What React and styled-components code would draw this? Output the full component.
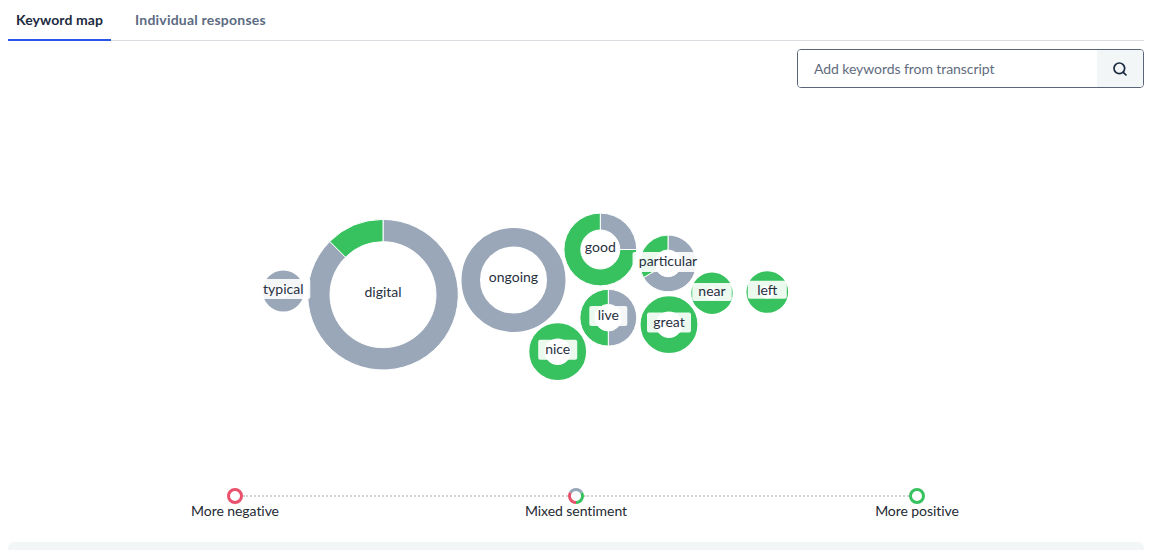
import React from 'react';
import styled, { createGlobalStyle } from 'styled-components';
import { Search } from 'lucide-react';

const GREEN = '#38c25f';
const GRAY = '#9aa7b8';
const RED = '#e9506b';

const Global = createGlobalStyle`
  html, body { margin: 0; padding: 0; background: #fff; overflow: hidden; }
  body { font-family: Lato, "Open Sans", "Liberation Sans", sans-serif; }
`;

const Page = styled.main`
  width: 1136px;
  height: 550px;
  margin-left: 8px;
  display: flex;
  flex-direction: column;
`;

const Tabs = styled.nav`
  display: flex;
  gap: 8px;
  height: 41px;
  box-sizing: border-box;
  border-bottom: 1px solid #d9dde2;
`;

const Tab = styled.button`
  height: 41px;
  padding: 0 8px 1px;
  margin-right: ${p => (p.$active ? '8px' : '0')};
  border: 0;
  border-bottom: 2px solid ${p => (p.$active ? '#2b54ea' : 'transparent')};
  background: none;
  font: 700 14px Lato, sans-serif;
  letter-spacing: ${p => (p.$active ? '0.09px' : '0.21px')};
  color: ${p => (p.$active ? '#1c2b41' : '#5c6b82')};
`;

const SearchRow = styled.div`
  display: flex;
  justify-content: flex-end;
  padding-top: 8px;
`;

const SearchBox = styled.form`
  width: 347px;
  height: 39px;
  box-sizing: border-box;
  display: flex;
  border: 1px solid #5b6579;
  border-radius: 4px;
  overflow: hidden;
`;

const SearchInput = styled.input`
  flex: 1;
  min-width: 0;
  border: 0;
  outline: 0;
  padding: 0 16px;
  font: 400 14px Lato, sans-serif;
  letter-spacing: -0.07px;
  &::placeholder { color: #5f6c7e; opacity: 1; }
`;

const SearchButton = styled.button`
  width: 46px;
  border: 0;
  padding: 0;
  background: #f3f6f7;
  color: #1c2b41;
  display: flex;
  align-items: center;
  justify-content: center;
`;

const Chart = styled.svg`
  display: block;
  flex: none;
`;

const Label = styled.text`
  font: 400 14px Lato, sans-serif;
  fill: #27303f;
  text-anchor: middle;
  dominant-baseline: central;
`;

const Legend = styled.section`
  display: flex;
  flex-direction: column;
`;

const Track = styled.div`
  display: flex;
  align-items: center;
  width: 698px;
  margin-left: 219px;
  height: 16px;
`;

const Dot = styled.span`
  flex: none;
  width: 16px;
  height: 16px;
  box-sizing: border-box;
  border-radius: 50%;
  border: 3px solid ${p => p.$color};
`;

const MixedDot = styled.svg`
  flex: none;
  display: block;
`;

const Dots = styled.span`
  flex: 1;
  height: 0;
  border-top: 2px dotted #cfd3d8;
`;

const Captions = styled.div`
  display: grid;
  grid-template-columns: repeat(3, 341px);
  margin-left: 56.5px;
  margin-top: -1px;
  justify-items: center;
`;

const Caption = styled.span`
  font-size: 14px;
  line-height: 16px;
  letter-spacing: -0.06px;
  color: #242a33;
`;

const Panel = styled.div`
  margin-top: auto;
  height: 8px;
  background: #f3f6f7;
  border-radius: 6px 6px 0 0;
`;

const polar = (cx, cy, r, deg) => {
  const a = ((deg - 90) * Math.PI) / 180;
  return [cx + r * Math.cos(a), cy + r * Math.sin(a)];
};

const arc = (cx, cy, R, r, from, to) => {
  const large = to - from > 180 ? 1 : 0;
  const [x1, y1] = polar(cx, cy, R, from);
  const [x2, y2] = polar(cx, cy, R, to);
  const [x3, y3] = polar(cx, cy, r, to);
  const [x4, y4] = polar(cx, cy, r, from);
  return `M${x1} ${y1}A${R} ${R} 0 ${large} 1 ${x2} ${y2}L${x3} ${y3}A${r} ${r} 0 ${large} 0 ${x4} ${y4}Z`;
};

const bubbles = [
  { t: 'typical', x: 283.3, y: 291, R: 20.6, r: 6.5, w: 54, h: 20, ry: 289, ty: 288.2, s: [[GRAY, 0, 360]] },
  { t: 'digital', x: 383, y: 294.7, R: 75.3, r: 53, w: 0, ty: 291.8, s: [[GRAY, 0, 315], [GREEN, 315, 360]] },
  { t: 'ongoing', x: 513.5, y: 280, R: 52, r: 33.5, w: 0, ty: 276.8, s: [[GRAY, 0, 360]] },
  { t: 'good', x: 600.3, y: 249.5, R: 36.4, r: 19.5, w: 0, ty: 246.2, s: [[GRAY, 0, 90], [GREEN, 90, 360]] },
  { t: 'particular', x: 668, y: 263.4, R: 28.3, r: 13.3, w: 71, h: 20, ry: 262, ty: 260.8, s: [[GRAY, 0, 240], [GREEN, 240, 360]] },
  { t: 'live', x: 608.3, y: 317.7, R: 28.4, r: 13.3, w: 38, h: 20, ry: 316, ty: 314.8, s: [[GRAY, 0, 180], [GREEN, 180, 360]] },
  { t: 'nice', x: 557.7, y: 351.7, R: 28.4, r: 13.3, w: 39, h: 20, ry: 349.7, ty: 348.6, s: [[GREEN, 0, 360]] },
  { t: 'great', x: 669, y: 324.7, R: 28.4, r: 13.3, w: 44, h: 20, ry: 322.5, ty: 321.6, s: [[GREEN, 0, 360]] },
  { t: 'near', x: 712, y: 293.2, R: 20.7, r: 6.5, w: 39.5, h: 18, ry: 292, ty: 290.4, s: [[GREEN, 0, 360]] },
  { t: 'left', x: 767.3, y: 292, R: 20.8, r: 6.5, w: 39, h: 18, ry: 289.7, ty: 289, s: [[GREEN, 0, 360]] },
];

const Ring = ({ b }) =>
  b.s.map(([color, from, to]) =>
    to - from === 360 ? (
      <circle
        key={color}
        cx={b.x}
        cy={b.y}
        r={(b.R + b.r) / 2}
        fill="none"
        stroke={color}
        strokeWidth={b.R - b.r}
      />
    ) : (
      <path key={from} d={arc(b.x, b.y, b.R, b.r, from, to)} fill={color} stroke="#fff" strokeWidth="1" />
    )
  );

export default function App() {
  return (
    <Page>
      <Global />
      <Tabs>
        <Tab $active>Keyword map</Tab>
        <Tab>Individual responses</Tab>
      </Tabs>
      <SearchRow>
        <SearchBox onSubmit={e => e.preventDefault()}>
          <SearchInput placeholder="Add keywords from transcript" />
          <SearchButton aria-label="Search">
            <Search size={16} strokeWidth={2.6} />
          </SearchButton>
        </SearchBox>
      </SearchRow>
      <Chart width="1136" height="400" viewBox="8 88 1136 400">
        {bubbles.map(b => <Ring key={b.t} b={b} />)}
        {bubbles.map(b =>
          b.w ? (
            <rect
              key={b.t}
              x={b.x - b.w / 2}
              y={b.ry - b.h / 2}
              width={b.w}
              height={b.h}
              rx="2"
              fill="#fff"
              fillOpacity="0.9"
            />
          ) : null
        )}
        {bubbles.map(b => (
          <Label key={b.t} x={b.x} y={b.ty}>{b.t}</Label>
        ))}
      </Chart>
      <Legend>
        <Track>
          <Dot $color={RED} />
          <Dots />
          <MixedDot width="16" height="16" viewBox="0 0 16 16">
            <path d={arc(8, 8, 8, 5, 300, 420)} fill={GRAY} />
            <path d={arc(8, 8, 8, 5, 60, 180)} fill={GREEN} />
            <path d={arc(8, 8, 8, 5, 180, 300)} fill={RED} />
          </MixedDot>
          <Dots />
          <Dot $color={GREEN} />
        </Track>
        <Captions>
          <Caption>More negative</Caption>
          <Caption>Mixed sentiment</Caption>
          <Caption>More positive</Caption>
        </Captions>
      </Legend>
      <Panel />
    </Page>
  );
}
